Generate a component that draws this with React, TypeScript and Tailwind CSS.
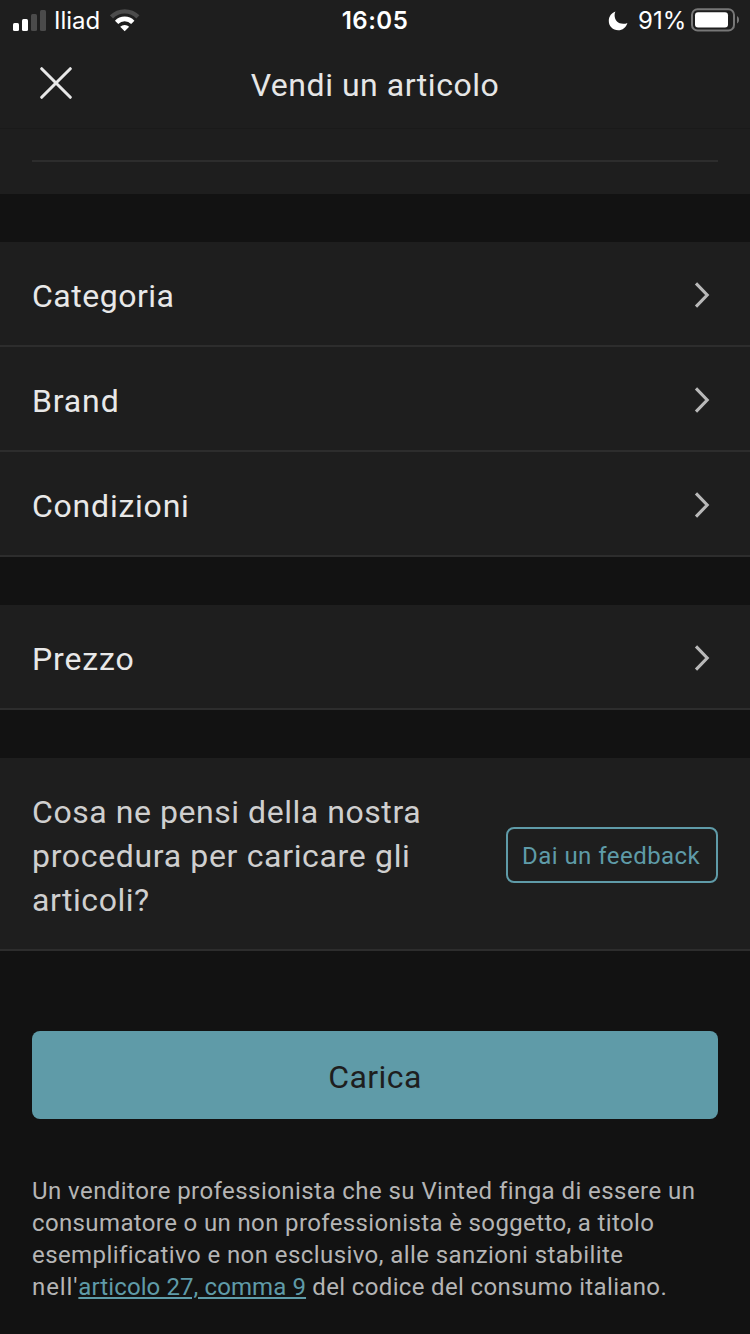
function SignalIcon() {
  return (
    <svg width="33" height="22" viewBox="0 0 33 22" aria-hidden="true">
      <rect x="0" y="13" width="6" height="8" rx="1.5" fill="#fff" />
      <rect x="9" y="9" width="6" height="12" rx="1.5" fill="#fff" />
      <rect x="18" y="4" width="6" height="17" rx="1.5" fill="#4b4b4b" />
      <rect x="27" y="0" width="6" height="21" rx="1.5" fill="#4b4b4b" />
    </svg>
  );
}

function WifiIcon() {
  return (
    <svg className="-mt-px" width="30" height="23" viewBox="0 0 30 23" fill="none" aria-hidden="true">
      <path d="M1.5 7.9A18.6 18.6 0 0 1 27.9 7.9" stroke="#4b4b4b" strokeWidth="4.4" />
      <path d="M6.6 13.3A11.3 11.3 0 0 1 22.8 13.3" stroke="#fff" strokeWidth="4.6" />
      <path d="M14.7 22.2L10.2 17.8A6.4 6.4 0 0 1 19.2 17.8Z" fill="#fff" />
    </svg>
  );
}

function MoonIcon() {
  return (
    <svg width="20" height="20" viewBox="0 0 20 20" aria-hidden="true">
      <path
        d="M7.4 .5C6.8 1.7 6.6 2.9 6.6 4.2C6.6 9.2 10.2 12.7 15.2 12.7C16.7 12.7 18.2 12.5 19.4 11.9C18.2 16.3 14.5 19.2 10.2 19.2C4.9 19.2 .8 15.2 .8 10C.8 5.6 3.4 1.9 7.4 .5Z"
        fill="#fff"
      />
    </svg>
  );
}

function BatteryIcon() {
  return (
    <svg className="-mt-px" width="49" height="24" viewBox="0 0 49 24" aria-hidden="true">
      <rect x="1" y="1.2" width="42" height="21.3" rx="5.6" fill="none" stroke="#777" strokeWidth="2" />
      <rect x="4" y="4.2" width="33" height="15.3" rx="3" fill="#fff" />
      <path d="M46 8C47.4 8.8 48 10.1 48 11.7S47.4 14.6 46 15.4Z" fill="#777" />
    </svg>
  );
}

function Chevron() {
  return (
    <svg width="16" height="28" viewBox="0 0 16 28" fill="none" aria-hidden="true">
      <path d="M2 2.4L13.2 14L2 25.6" stroke="#b9b9b9" strokeWidth="3.1" />
    </svg>
  );
}

function Row({ label, tracking }: { label: string; tracking: string }) {
  return (
    <button className="flex h-[105px] w-full items-center justify-between border-b-2 border-[#2d2d2d] bg-[#1e1e1e] pr-10 pl-8 text-left">
      <span className={`pt-[5px] text-[32px] leading-[44px] text-[#e8e8e8] ${tracking}`}>{label}</span>
      <span className="pt-[3px]">
        <Chevron />
      </span>
    </button>
  );
}

export default function App() {
  return (
    <div className="h-[1334px] w-[750px] overflow-hidden bg-[#121212] font-['Roboto',sans-serif] whitespace-nowrap">
      <header className="h-[129px] border-b border-[#1a1a1a] bg-[#1e1e1e]">
        <div className="grid h-10 grid-cols-[1fr_auto_1fr] items-center pt-px pr-[10px] pl-[13px] font-['Inter',sans-serif] text-2xl leading-8 text-white">
          <div className="flex items-center">
            <SignalIcon />
            <span className="ml-2 w-14">Iliad</span>
            <WifiIcon />
          </div>
          <span className="mr-[3px] font-semibold tracking-[0.5px]">16:05</span>
          <div className="flex items-center justify-end">
            <MoonIcon />
            <span className="ml-[10px] w-[53px]">91%</span>
            <BatteryIcon />
          </div>
        </div>
        <div className="grid h-[88px] grid-cols-[1fr_auto_1fr] items-center px-10">
          <button className="-mt-[2px] w-8" aria-label="Chiudi">
            <svg width="32" height="32" viewBox="0 0 32 32" aria-hidden="true">
              <path d="M1.7 1.7L30.3 30.3M30.3 1.7L1.7 30.3" stroke="#e8e8e8" strokeWidth="3" strokeLinecap="round" />
            </svg>
          </button>
          <h1 className="pt-[2px] text-[32px] leading-[44px] tracking-[0.53px] text-[#e6e6e6]">Vendi un articolo</h1>
        </div>
      </header>

      <main>
        <div className="h-[65px] bg-[#1e1e1e] px-8 pt-[31px]">
          <div className="h-0.5 bg-[#2d2d2d]" />
        </div>

        <section className="mt-12">
          <Row label="Categoria" tracking="tracking-[0.5px]" />
          <Row label="Brand" tracking="tracking-[0.85px]" />
          <Row label="Condizioni" tracking="tracking-[0.77px]" />
        </section>

        <section className="mt-12">
          <Row label="Prezzo" tracking="tracking-[0.85px]" />
        </section>

        <section className="mt-12 flex h-[193px] items-start justify-between border-b-2 border-[#2d2d2d] bg-[#1e1e1e] px-8 pt-8">
          <p className="text-[32px] leading-[44px] text-[#cfcfcf]">
            <span className="block tracking-[0.55px]">Cosa ne pensi della nostra</span>
            <span className="block tracking-[0.66px]">procedura per caricare gli</span>
            <span className="block tracking-[0.52px]">articoli?</span>
          </p>
          <button className="mt-[37px] flex h-14 w-[212px] items-center rounded-lg border-2 border-[#5f9ba8] pt-[2px] pl-[14px] text-2xl tracking-[0.46px] text-[#5f9ba8]">
            Dai un feedback
          </button>
        </section>

        <section className="px-8 pt-20">
          <button className="flex h-[88px] w-full items-center justify-center rounded-lg bg-[#5f9ba8] pt-1 text-[32px] leading-[44px] tracking-[0.4px] text-[#1e1e1e]">
            Carica
          </button>
          <p className="mt-14 text-2xl leading-8 text-[#b5b5b5]">
            <span className="block tracking-[0.44px]">
              Un venditore professionista che su Vinted finga di essere un
            </span>
            <span className="block tracking-[0.37px]">consumatore o un non professionista è soggetto, a titolo</span>
            <span className="block tracking-[0.425px]">esemplificativo e non esclusivo, alle sanzioni stabilite</span>
            <span className="block tracking-[0.35px]">
              <span className="tracking-[0.9px]">nell'</span>
              <a className="tracking-[0.1px] text-[#5f9ba8] underline decoration-2 underline-offset-2">
                articolo 27, comma 9
              </a>{" "}
              del codice del consumo italiano.
            </span>
          </p>
        </section>
      </main>
    </div>
  );
}
